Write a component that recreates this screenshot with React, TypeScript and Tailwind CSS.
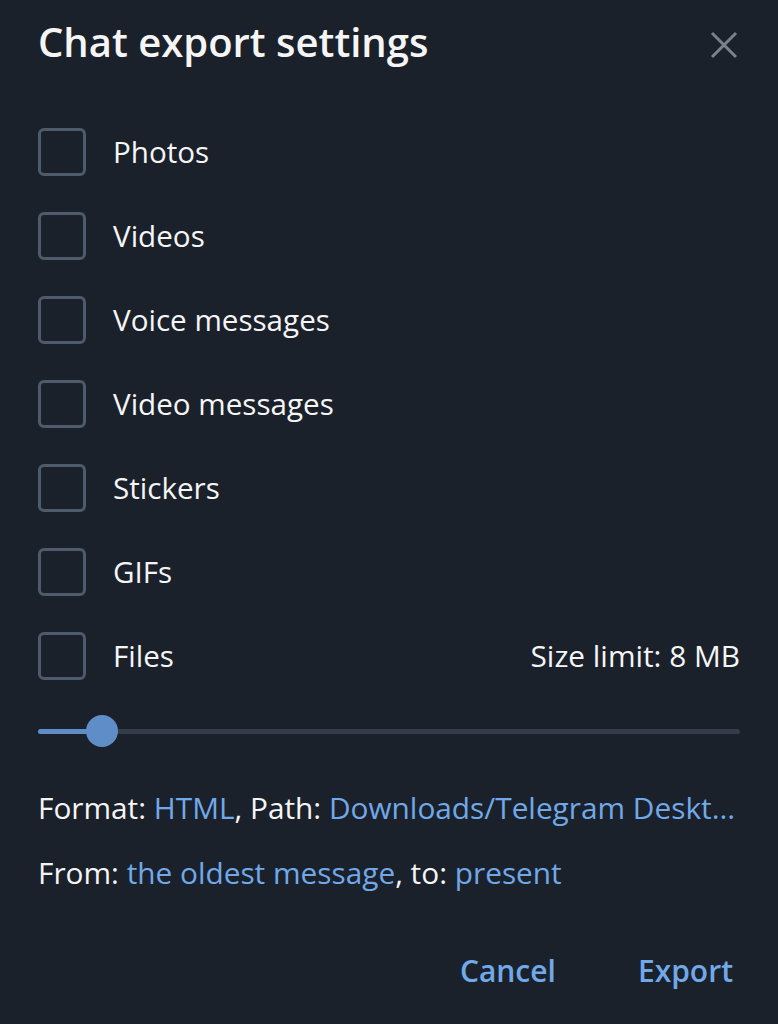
import React from "react";

const items = ["Photos", "Videos", "Voice messages", "Video messages", "Stickers", "GIFs", "Files"];

function Box() {
  return <div className="w-[48px] h-[48px] shrink-0 rounded-[6px] border-[3px] border-[#4d5b6c]" />;
}

export default function App() {
  return (
    <div
      className="w-[778px] h-[1024px] bg-[#1b212b] text-[#f5f5f5] flex flex-col"
      style={{ fontFamily: '"Open Sans", "Noto Sans", sans-serif' }}
    >
      <div className="flex items-center justify-between pl-[38px] pr-[40px] pt-[18px] h-[86px]">
        <h1 className="text-[40px] font-semibold leading-none mb-[20px]">Chat export settings</h1>
        <svg width="28" height="28" viewBox="0 0 28 28" className="mb-[14px]">
          <path d="M2 2 L26 26 M26 2 L2 26" stroke="#7b8189" strokeWidth="3" strokeLinecap="butt" />
        </svg>
      </div>
      <div className="flex flex-col gap-[36px] pl-[38px] pr-[38px] mt-[42px]">
        {items.map((t) => (
          <div key={t} className="flex items-center h-[48px]">
            <Box />
            <span className="ml-[27px] text-[29.6px] leading-none">{t}</span>
            {t === "Files" && <span className="ml-auto text-[29.8px] leading-none">Size limit: 8 MB</span>}
          </div>
        ))}
      </div>
      <div className="relative mx-[38px] mt-[35px] h-[32px] flex items-center">
        <div className="h-[5px] w-full rounded-full bg-[#343d49]" />
        <div className="absolute left-0 h-[5px] w-[64px] rounded-l-full bg-[#5e8dc8]" />
        <div className="absolute left-[48px] w-[32px] h-[32px] rounded-full bg-[#5e8dc8]" />
      </div>
      <div className="pl-[38px] pr-[38px] mt-[46px] text-[29.8px] leading-none whitespace-nowrap">
        Format: <span className="text-[#71a9e8]">HTML</span>, Path: <span className="text-[#71a9e8]">Downloads/Telegram Deskt...</span>
      </div>
      <div className="pl-[38px] mt-[35px] text-[29.8px] leading-none whitespace-nowrap">
        From: <span className="text-[#71a9e8]">the oldest message</span>, to: <span className="text-[#71a9e8]">present</span>
      </div>
      <div className="flex justify-end pr-[45px] mt-[68px] gap-[82px] text-[30px] font-semibold text-[#71a9e8] leading-none">
        <span>Cancel</span>
        <span>Export</span>
      </div>
    </div>
  );
}
